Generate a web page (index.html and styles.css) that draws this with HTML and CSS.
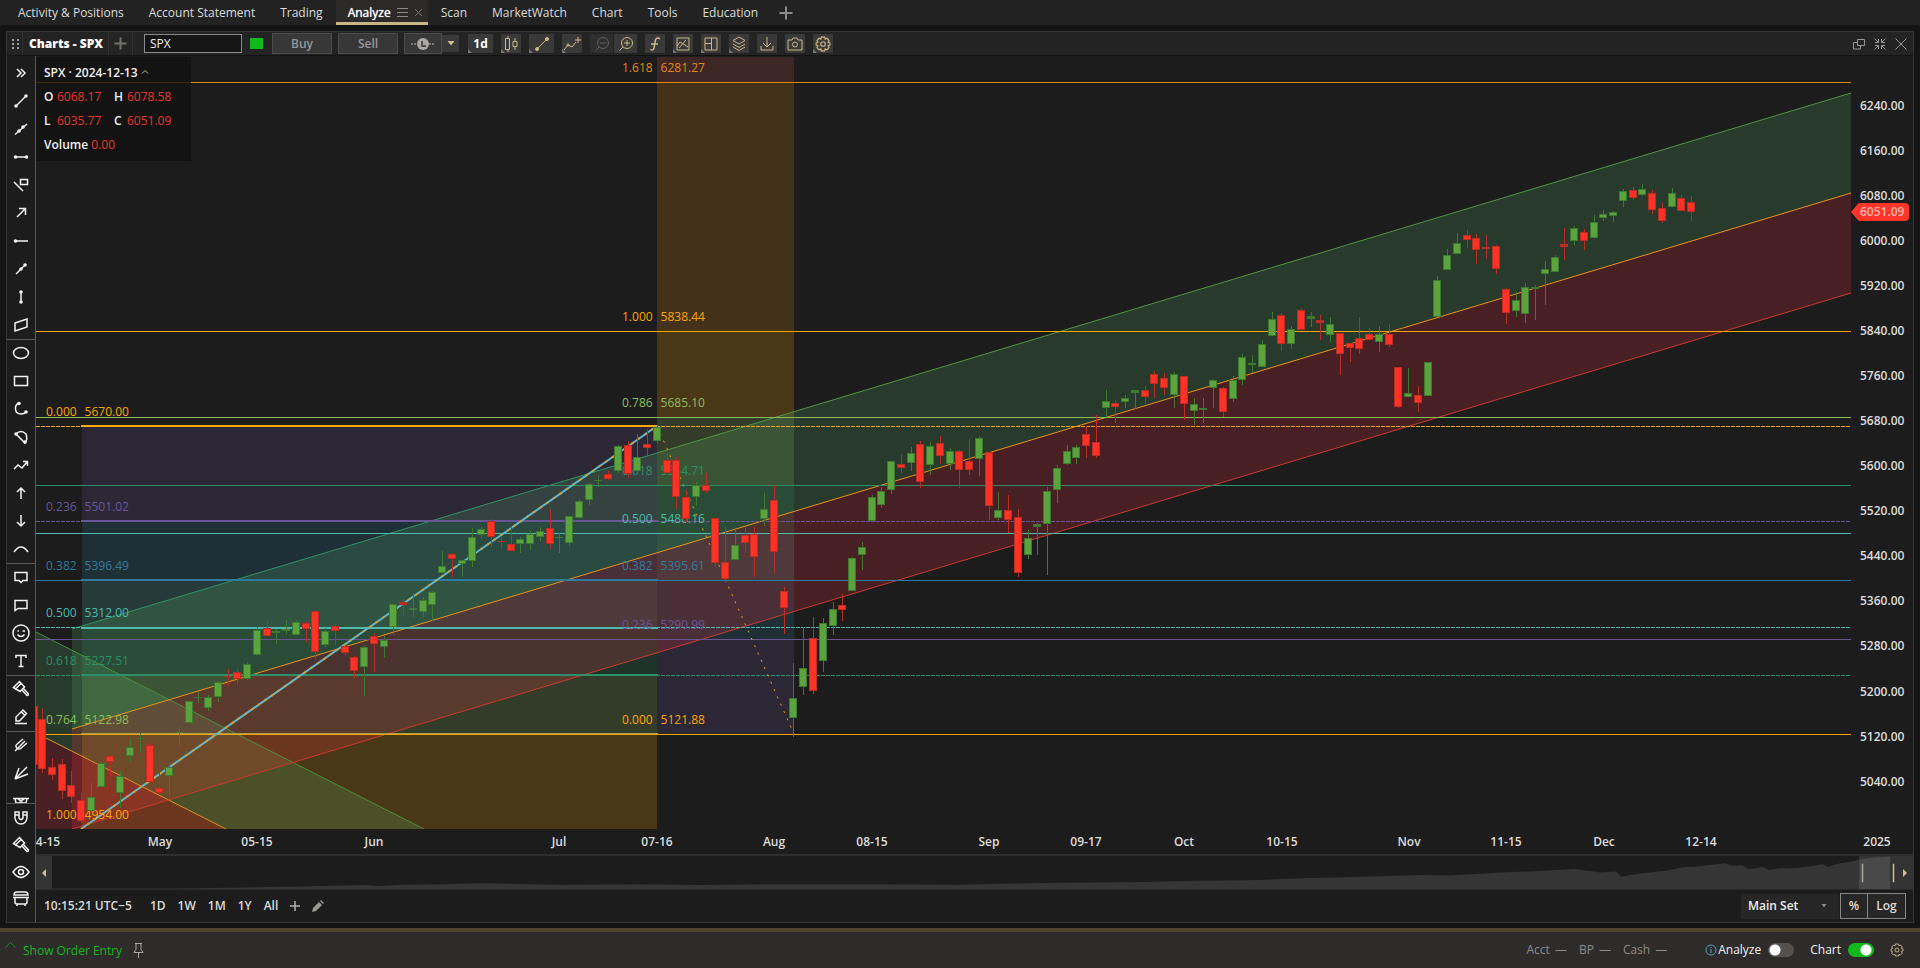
FILE: index.html
```html
<!DOCTYPE html>
<html lang="en">
<head>
<meta charset="utf-8">
<title>Charts - SPX</title>
<link rel="stylesheet" href="styles.css">
</head>
<body>
<nav class="tabs">
  <a class="tab" href="#">Activity &amp; Positions</a>
  <a class="tab" href="#">Account Statement</a>
  <a class="tab" href="#">Trading</a>
  <div class="tab active"><a href="#">Analyze</a>
    <button class="bare" aria-label="Tab menu"><svg width="11" height="12" viewBox="0 0 11 12"><path d="M0 1.500h11M0 5.500h11M0 9.500h11" stroke="#8d8a84"/></svg></button>
    <button class="bare" aria-label="Close tab"><svg width="9" height="12" viewBox="0 0 9 12"><path d="M1 2l7 7M8 2l-7 7" stroke="#77746f"/></svg></button>
  </div>
  <a class="tab" href="#">Scan</a>
  <a class="tab" href="#">MarketWatch</a>
  <a class="tab" href="#">Chart</a>
  <a class="tab" href="#">Tools</a>
  <a class="tab" href="#">Education</a>
  <button class="bare add-tab" aria-label="Add tab"><svg width="14" height="14" viewBox="0 0 14 14"><path d="M7 0.500v13M0.500 7h13" stroke="#8f8d89" stroke-width="2"/></svg></button>
</nav>

<main class="panel">
  <header class="toolbar">
    <span class="grip"><svg width="8" height="12" viewBox="0 0 8 12" fill="#a3a09b"><path d="M0 1h2v2H0zM5 1h2v2H5zM0 5h2v2H0zM5 5h2v2H5zM0 9h2v2H0zM5 9h2v2H5z"/></svg></span>
    <h1 class="title">Charts - SPX</h1>
    <button class="bare add" aria-label="Add chart"><svg width="13" height="13" viewBox="0 0 13 13"><path d="M6.500 0.500v12M0.500 6.500h12" stroke="#74726e" stroke-width="2"/></svg></button>
    <input class="symbol" aria-label="Symbol" value="SPX">
    <i class="link"></i>
    <button class="trade">Buy</button>
    <button class="trade">Sell</button>
    <div class="clock">
      <button class="trade clock-main" aria-label="Session"><svg width="24" height="14" viewBox="0 0 24 14"><path d="M0 7h6M18 7h6" stroke="#bdb9b0" stroke-dasharray="2 1"/><circle cx="12" cy="7" r="6" fill="#aaa8a4"/><path d="M11 4v5h4" stroke="#333" stroke-width="1.500" fill="none"/></svg></button>
      <button class="tool arrow" aria-label="Session menu"><svg width="8" height="5" viewBox="0 0 8 5"><path d="M0.500 0h7L4 4.500z" fill="#d3bd8a"/></svg></button>
    </div>
    <div class="tools" id="tools">
      <button class="tool wide corner">1d</button>
      <button class="tool corner" aria-label="Chart type"><svg width="14" height="16" viewBox="0 0 14 16"><path d="M4 0v2M4 14v2M1.500 2.500h4v11h-4zM11 2v3M11 11v3M9 5.500h4v5H9z"/></svg></button>
      <button class="tool wide corner" aria-label="Draw line"><svg width="14" height="14" viewBox="0 0 14 14"><path d="M2 12L12 2"/><circle cx="2" cy="12" r="1.500" fill="#cdb988"/><circle cx="12" cy="2" r="1.500" fill="#cdb988"/></svg></button>
      <button class="tool corner" aria-label="Add study"><svg width="18" height="16" viewBox="0 0 18 16"><path d="M1 14l4-5 4 2 4-5M15 1v6M12 4h6"/><circle cx="5" cy="9" r="1"/></svg></button>
      <div class="pair">
        <button class="tool dim" aria-label="Zoom out"><svg width="16" height="16" viewBox="0 0 16 16"><circle cx="9" cy="7" r="5.500"/><path d="M5 11l-3.500 3.500M6 7h6"/></svg></button>
        <button class="tool" aria-label="Zoom in"><svg width="16" height="16" viewBox="0 0 16 16"><circle cx="9" cy="7" r="5.500"/><path d="M5 11l-3.500 3.500M6 7h6M9 4v6"/></svg></button>
      </div>
      <button class="tool" aria-label="Functions"><svg width="12" height="14" viewBox="0 0 12 14"><path d="M11 2C9 0 7 1 6.500 3L5 11c-0.500 2-2 2.500-3.500 1.500M2 7h7" stroke-width="1.500"/></svg></button>
      <button class="tool corner" aria-label="Patterns"><svg width="14" height="14" viewBox="0 0 14 14"><path d="M1 1h12v12H1zM1 9l3-4 8 5M3 11l7-8"/></svg></button>
      <button class="tool corner" aria-label="Layout"><svg width="14" height="14" viewBox="0 0 14 14"><path d="M1 1h12v12H1zM7.500 1v12M1 6.500h6"/></svg></button>
      <button class="tool corner" aria-label="Layers"><svg width="14" height="16" viewBox="0 0 14 16"><path d="M7 1l6 3.500L7 8 1 4.500zM1 8l6 3.500L13 8M1 11l6 3.500 6-3.500"/></svg></button>
      <button class="tool" aria-label="Download"><svg width="14" height="14" viewBox="0 0 14 14"><path d="M7 0v9M3 6l4 4 4-4M1 9v4h12V9"/></svg></button>
      <button class="tool" aria-label="Snapshot"><svg width="16" height="14" viewBox="0 0 16 14"><path d="M1 3h4l1-2h4l1 2h4v10H1z"/><circle cx="8" cy="7.500" r="2.500"/></svg></button>
      <button class="tool corner" aria-label="Settings"><svg width="16" height="16" viewBox="0 0 14 14"><path d="M5.500 1h3l.4 1.700 1.600-.7 1.800 2-.9 1.500L13 6v2l-1.600.6.9 1.600-1.800 1.900-1.600-.8L8.500 13h-3l-.4-1.700-1.600.8-1.800-1.900.9-1.600L1 8V6l1.600-.5L1.700 4l1.800-2 1.600.7z"/><circle cx="7" cy="7" r="2"/></svg></button>
    </div>
    <div class="window-actions">
      <button class="bare" aria-label="Pop out"><svg width="12" height="12" viewBox="0 0 12 12"><path d="M4.500 1.500h7v6h-7zM4 4.500H0.500v6.500h7V8" fill="none" stroke="#9a9894"/></svg></button>
      <button class="bare" aria-label="Restore"><svg width="12" height="12" viewBox="0 0 12 12"><path d="M0.500 0.500L4 4M4.500 1v3.500H1M11.500 0.500L8 4M7.500 1v3.500H11M0.500 11.500L4 8M4.500 11V7.500H1M11.500 11.500L8 8M7.500 11V7.500H11" fill="none" stroke="#9a9894"/></svg></button>
      <button class="bare" aria-label="Close"><svg width="12" height="12" viewBox="0 0 12 12"><path d="M0.500 0.500l11 11M11.500 0.500l-11 11" stroke="#9a9894"/></svg></button>
    </div>
  </header>

  <div class="content">
    <aside class="drawbar">
      <div class="scroll" id="drawings"></div>
      <div class="fixed" id="fixed"></div>
    </aside>
    <section class="chart">
      <div class="plot-row">
        <div class="plot" id="plot">
          <svg class="layer" id="under" viewBox="36 57 1815 772" preserveAspectRatio="none"></svg>
          <div class="layer" id="labels"></div>
          <svg class="layer" id="candles" viewBox="36 57 1815 772" preserveAspectRatio="none" shape-rendering="crispEdges"></svg>
          <div class="legend">
            <div>SPX · 2024-12-13 <svg width="8" height="5" viewBox="0 0 8 5"><path d="M1 4.500L4 1.500l3 3" fill="none" stroke="#d3bd8a"/></svg></div>
            <div class="pairs"><span>O</span><em>6068.17</em><span>H</span><em>6078.58</em></div>
            <div class="pairs"><span>L</span><em>6035.77</em><span>C</span><em>6051.09</em></div>
            <div>Volume <em>0.00</em></div>
          </div>
        </div>
        <div class="yaxis" id="yaxis">
          <div class="tag"><svg width="9" height="18" viewBox="0 0 9 18"><path d="M9 0Q7 0 6 2L0 9l6 7q1 2 3 2z" fill="#ff3529"/></svg><span>6051.09</span></div>
        </div>
      </div>
      <div class="xaxis"><div class="xscale" id="xscale"></div></div>
      <div class="navigator">
        <button class="nav-btn" aria-label="Scroll left"><svg width="4" height="8" viewBox="0 0 4 8"><path d="M4 0v8L0 4z" fill="#d3bd8a"/></svg></button>
        <svg class="overview" viewBox="51 855 1846 34" preserveAspectRatio="none">
          <path fill="#353535" d="M51 888.500L180 888.500 300 886.500 340 885.500 365 885 378 886 400 884.500 440 884 480 883 560 884.500 640 884 700 885 780 884 880 884 960 884.500 1000 883.500 1060 882.500 1130 882 1200 880.500 1249 880 1300 878 1360 876.500 1420 874.500 1450 875 1500 872 1540 870.500 1575 868.500 1586 870 1600 872 1608 871.500 1616 871 1621 876.500 1633 874 1667 870 1683 866.500 1700 865.500 1712 864 1725 862.500 1733 865 1742 864.500 1748 868.500 1757 867.500 1762 866 1769 869.500 1780 867.500 1795 867.500 1813 865 1822 863.500 1828 866 1840 862.500 1850 861 1857 859.500 1868 857 1890 855.500 1890 889 51 889z"/>
          <path fill="#ffffff" fill-opacity=".1" d="M1859 855h38v34h-38z"/>
          <path stroke="#aaa69d" stroke-width="1.500" d="M1862.500 863v19"/>
          <path stroke="#d3bd8a" stroke-width="1.500" d="M1893.500 863v19"/>
        </svg>
        <button class="nav-btn" aria-label="Scroll right"><svg width="4" height="8" viewBox="0 0 4 8"><path d="M0 0v8l4-4z" fill="#d3bd8a"/></svg></button>
      </div>
      <footer class="ranges">
        <time>10:15:21 UTC−5</time>
        <button>1D</button><button>1W</button><button>1M</button><button>1Y</button><button>All</button>
        <button aria-label="Add range"><svg width="10" height="10" viewBox="0 0 10 10"><path d="M5 0v10M0 5h10" stroke="#b5b3af" stroke-width="1.500"/></svg></button>
        <button aria-label="Edit ranges"><svg width="12" height="12" viewBox="0 0 12 12" fill="#9a9894"><path d="M0 12l1-4 6-6 3 3-6 6zM8 1l1-1 3 3-1 1z"/></svg></button>
        <span class="spacer"></span>
        <label class="set"><select aria-label="Drawing set"><option>Main Set</option></select><svg width="6" height="4" viewBox="0 0 6 4"><path d="M0.500 0h5L3 3.500z" fill="#8f8d89"/></svg></label>
        <div class="modes"><button>%</button><button>Log</button></div>
      </footer>
    </section>
  </div>
</main>

<footer class="status">
  <svg class="up" width="11" height="6" viewBox="0 0 11 6"><path d="M0.500 5.500l5-5 5 5" fill="none" stroke="#178a1e"/></svg>
  <a class="order" href="#">Show Order Entry</a>
  <button class="bare" aria-label="Pin"><svg width="11" height="17" viewBox="0 0 11 17"><path d="M2 1.500h7M3 1.500v6l-2 3h9l-2-3v-6M5.500 10.500V16" fill="none" stroke="#aaa8a4"/></svg></button>
  <span class="spacer"></span>
  <span class="acct"><span>Acct<b>—</b></span><span>BP<b>—</b></span><span>Cash<b>—</b></span></span>
  <label class="switch info"><svg width="12" height="12" viewBox="0 0 12 12"><circle cx="6" cy="6" r="5" fill="none" stroke="#4fa3bd"/><path d="M6 5v4M6 3v1" stroke="#4fa3bd"/></svg>Analyze<input type="checkbox"></label>
  <label class="switch">Chart<input type="checkbox" checked></label>
  <button class="bare" aria-label="Preferences"><svg width="14" height="14" viewBox="0 0 14 14" fill="none" stroke="#c4b083"><path d="M5.500 1h3l.4 1.700 1.600-.7 1.800 2-.9 1.500L13 6v2l-1.600.6.9 1.600-1.800 1.900-1.600-.8L8.500 13h-3l-.4-1.700-1.600.8-1.800-1.900.9-1.600L1 8V6l1.600-.5L1.700 4l1.800-2 1.600.7z"/><circle cx="7" cy="7" r="2"/></svg></button>
</footer>
<script src="chart.js"></script>
</body>
</html>
```

FILE: styles.css
```css
* { box-sizing: border-box; }
html, body { height: 100%; }
body {
  margin: 0;
  display: flex;
  flex-direction: column;
  overflow: hidden;
  background: #141414;
  color: #dcdcdc;
  font: 12px/16px "Open Sans", "Noto Sans", sans-serif;
}
a { color: inherit; text-decoration: none; }
button, input, select { font: inherit; color: inherit; border: 0; padding: 0; margin: 0; background: none; border-radius: 0; }
button, .tab svg, .tool svg { display: flex; align-items: center; justify-content: center; }
svg { flex: none; display: block; }
.spacer { flex: 1; }

.tabs { display: flex; height: 25px; flex: none; padding-left: 6px; gap: 1px; background: #222; }
.tab { display: flex; align-items: center; padding: 1px 12px 0; white-space: nowrap; }
.tab.active { background: #2b2a29; color: #fff; padding: 3px 5px 0 12px; gap: 6px; border-bottom: 3px solid #c8b584; text-shadow: 0 0 1px #fff; }
.add-tab { margin-left: 8px; }

.panel { flex: 1; min-height: 0; margin: 6px 6px 5px; border: 1px solid #353535; background: #1c1c1c; display: flex; flex-direction: column; }
.toolbar { height: 24px; flex: none; display: flex; align-items: center; background: #232323; border-bottom: 1px solid #121212; }
.grip, .title, .add { height: 100%; display: flex; align-items: center; border-right: 1px solid #303030; }
.grip { width: 16px; padding-left: 5px; }
.title { width: 86px; margin: 0; padding-left: 6px; font-size: 12px; font-weight: 800; color: #fff; white-space: nowrap; }
.add { width: 24px; border-right: 1px solid #303030; }
.symbol { width: 98px; height: 19px; margin-left: 11px; padding: 0 5px; border: 1px solid #8a8a8a; background: #151515; color: #eee; }
.link { width: 13px; height: 11px; margin: 0 9px 0 8px; background: #10b91c; }
.trade { width: 60px; height: 21px; margin-right: 6px; border: 1px solid #4b4b4b; background: #373737; color: #969696; font-weight: 600; }
.clock { display: flex; align-items: center; margin-right: 9px; }
.trade.clock-main { width: 38px; margin: 0; }
.tools { display: flex; gap: 8px; }
.tool { position: relative; width: 20px; height: 19px; background: #393939; color: #fff; font-weight: 700; }
.tool.wide { width: 25px; }
.tool.arrow { width: 17px; height: 17px; }
.tool svg { fill: none; stroke: #cdb988; }
.tool.arrow svg { stroke: none; }
.tool.corner::after { content: ""; position: absolute; left: 0; bottom: 0; border: 2px solid transparent; border-left-color: #777; border-bottom-color: #777; }
.pair { display: flex; gap: 1px; }
.pair .tool { width: 23px; }
.pair .dim { background: #2e2e2e; }
.pair .dim svg { stroke: #626059; }
.window-actions { margin-left: auto; display: flex; gap: 9px; padding-right: 6px; }

.content { flex: 1; min-height: 0; display: flex; }
.drawbar { width: 29px; flex: none; display: flex; flex-direction: column; border-right: 1px solid #5a5a5a; }
.scroll { flex: 1; min-height: 0; overflow: hidden; padding-top: 3px; }
.fixed { flex: none; border-top: 1px solid #5a5a5a; padding-bottom: 10px; }
.group + .group { box-shadow: inset 0 1px #5a5a5a; }
.draw { width: 28px; height: 28px; }
.fixed .draw { height: 27px; }
.draw svg { fill: none; stroke: #f2f2f2; stroke-width: 1.500; }
.draw .dot { fill: #f2f2f2; stroke: none; }

.chart { flex: 1; min-width: 0; display: flex; flex-direction: column; padding-top: 1px; }
.plot-row { flex: 1; min-height: 0; display: flex; }
.plot { flex: 1; min-width: 0; position: relative; overflow: hidden; }
.layer { position: absolute; left: 0; top: 0; width: 100%; height: 100%; }
.fib { position: absolute; display: flex; gap: 8px; margin-top: -7px; white-space: nowrap; font-weight: 500; }
.legend { position: absolute; left: 0; top: 0; width: 155px; padding: 8px 8px 8px; background: rgba(17, 17, 17, .8); color: #f0f0f0; font-weight: 600; display: flex; flex-direction: column; gap: 8px; }
.legend svg { display: inline-block; vertical-align: 3px; }
.legend em { font-style: normal; font-weight: 400; color: #e8372d; }
.pairs { display: grid; grid-template-columns: 13px 57px 13px 57px; }
.yaxis { position: relative; width: 62px; flex: none; font-weight: 600; }
.tick { position: absolute; left: 9px; margin-top: -8px; }
.tag { position: absolute; left: 0; top: 19%; margin-top: -1px; display: flex; line-height: 18px; color: #ffb4ad; z-index: 1; }
.tag span { padding-right: 5px; background: #ff3529; border-radius: 0 4px 4px 0; }
.xaxis { height: 25px; flex: none; font-weight: 600; overflow: hidden; }
.xscale { position: relative; margin-right: 62px; height: 100%; }
.date { position: absolute; top: 5px; transform: translateX(-50%); }
.navigator { height: 36px; flex: none; display: flex; border-top: 2px solid #2e2e2e; border-bottom: 1px solid #2a2a2a; }
.nav-btn { width: 16px; background: #333; }
.overview { flex: 1; min-width: 0; height: 100%; }
.ranges { height: 32px; flex: none; display: flex; align-items: center; padding: 0 7px 0 8px; gap: 12px; font-weight: 600; color: #dadada; }
.ranges time { margin-right: 6px; }
.set { position: relative; display: flex; align-items: center; width: 98px; height: 25px; background: #262626; }
.set select { appearance: none; width: 100%; height: 100%; padding-left: 7px; color: #eee; }
.set svg { position: absolute; right: 12px; }
.modes { display: flex; margin-left: -11px; }
.modes button { height: 26px; width: 28px; border: 1px solid #858585; background: #262626; }
.modes button + button { width: 39px; margin-left: -1px; }

.status { flex: none; height: 40px; border-top: 4px solid #4f452f; background: #2d2c2b; display: flex; align-items: center; padding: 0 16px 0 5px; }
.bare svg { display: block; }
.up { margin-bottom: 10px; }
.order { color: #14b81e; margin: 2px 11px 0 7px; }
.acct { display: flex; gap: 12px; color: #8d8b87; margin-right: 38px; }
.acct b { font-weight: 400; margin-left: 5px; }
.switch { display: flex; align-items: center; color: #f2f2f2; margin-right: 16px; }
.switch input { appearance: none; width: 26px; height: 14px; border-radius: 7px; margin-left: 7px; background: radial-gradient(circle at 7px 7px, #fff 5px, transparent 6px) #55524e; }
.switch input:checked { background: radial-gradient(circle at 18px 7px, #fff 5px, transparent 6px) #10b91c; }
.info svg { margin-right: 1px; }
```

FILE: chart.js
```js
// Plot coordinates: x 36..1851, y 57..829
const X0 = 36, Y0 = 57, W = 1815, H = 772;
const px = x => (x - X0) / W * 100 + '%';
const py = y => (y - Y0) / H * 100 + '%';

const C = { or: '#ffa500', top: '#e08a10', lime: '#8bbf5a', grn: '#2b9068', teal: '#4fb9ad', blue: '#2f7b9f', pur: '#6b5599', red: '#c93a2d' };
const rect = (x, y, w, h, f) => `<rect x="${x}" y="${y}" width="${w}" height="${h}" fill="${f}" fill-opacity=".2" shape-rendering="crispEdges"/>`;
const line = (x1, y1, x2, y2, c, w = 1, d = '') => `<path d="M${x1} ${y1}L${x2} ${y2}" stroke="${c}" stroke-width="${w}" stroke-dasharray="${d}" fill="none"/>`;
const poly = (p, f) => `<polygon points="${p}" fill="${f}" fill-opacity=".2"/>`;

let s = '';
[[427, 521, C.pur], [521, 580, C.blue], [580, 628, C.teal], [628, 675, C.grn], [675, 734, C.lime], [734, 829, C.or]]
  .forEach(b => s += rect(82, b[0], 575, b[1] - b[0], b[2]));
[[57, 82, '#c85046'], [82, 331, C.top], [331, 417, C.or], [417, 485, C.lime], [485, 533, C.grn], [533, 580, C.teal], [580, 639, C.blue], [639, 734, C.pur]]
  .forEach(b => s += rect(657, b[0], 137, b[1] - b[0], b[2]));
s += poly('36,632 424,829 226,829 36,733', '#58b267') + poly('36,733 226,829 36,829', '#f8303f');
s += poly('72,629 1851,93 1851,193 72,729', '#58b267') + poly('72,729 1851,193 1851,293 72,829', '#f8303f');
s += line(36, 632, 424, 829, '#4f8f3d') + line(36, 733, 226, 829, '#e0901a');
s += line(72, 629, 657, 453, '#2f9464') + line(657, 453, 1851, 93, '#4f963f') + line(72, 729, 1851, 193, '#e8941a') + line(72, 829, 1851, 293, C.red);
s += line(81, 733.5, 658, 733.5, '#a8a050');
[[82.5, C.top], [331.5, C.or], [417.5, C.lime], [485.5, C.grn], [533.5, C.teal], [580.5, C.blue], [639.5, C.pur], [734.5, C.or]]
  .forEach(l => s += line(36, l[0], 1851, l[0], l[1]));
[[426.5, C.or], [521.5, C.pur], [627.5, C.teal], [675.5, C.grn]]
  .forEach(l => s += line(36, l[0], 1851, l[0], l[1], 1, '4 1'));
[[426, C.or], [521, C.pur], [580, C.blue], [628, C.teal], [675, C.grn]]
  .forEach(l => s += line(81, l[0], 658, l[0], l[1], 2));
s += line(81, 829, 657, 426, '#63b9cb', 2) + line(81, 829, 657, 426, '#e09a20', 2, '2 6') + line(657, 426, 794, 734, C.or, 1, '2 6');
document.getElementById('under').innerHTML = s;

// [x, y, ratio, price, colour]
const fibs = [
  [46, 411, '0.000', '5670.00', C.or], [46, 506, '0.236', '5501.02', C.pur], [46, 565, '0.382', '5396.49', C.blue],
  [46, 612, '0.500', '5312.00', C.teal], [46, 660, '0.618', '5227.51', C.grn], [46, 719, '0.764', '5122.98', C.lime], [46, 814, '1.000', '4954.00', C.or],
  [622, 67, '1.618', '6281.27', C.top], [622, 316, '1.000', '5838.44', C.or], [622, 402, '0.786', '5685.10', C.lime],
  [622, 470, '0.618', '5564.71', C.grn], [622, 518, '0.500', '5480.16', C.teal], [622, 565, '0.382', '5395.61', C.blue],
  [622, 624, '0.236', '5290.99', C.pur], [622, 719, '0.000', '5121.88', C.or]
];
document.getElementById('labels').innerHTML = fibs.map(f =>
  `<div class="fib" style="left:${px(f[0])};top:${py(f[1])};color:${f[4]}"><span>${f[2]}</span><span>${f[3]}</span></div>`).join('');

// One session per entry: direction, high, body top, body bottom, low
const data = `R 706 706 765 765|R 708 719 769 773|R 758 767 775 780|R 759 764 791 799|R 771 785 797 803|R 793 800 821 823|G 782 797 811 813|G 762 763 787 787|R 755 756 762 777|G 771 776 793 808|G 739 747 756 762|G 733 738 739 753|R 743 745 782 783|R 750 788 793 795|G 763 767 776 797|G 726 732 733 746|G 701 701 723 723|G 691 697 698 703|G 695 697 708 711|G 682 682 697 702|R 669 676 677 686|R 669 672 679 685|G 662 664 679 680|G 627 630 655 655|R 620 628 636 636|G 629 631 633 644|G 620 629 631 634|G 620 622 635 635|R 621 623 629 642|R 610 611 652 659|G 628 631 645 647|R 624 626 631 645|R 645 646 653 655|R 656 657 671 678|G 645 647 667 696|R 633 636 644 672|G 636 640 647 658|G 604 604 627 635|R 599 602 605 615|G 593 608 610 617|G 597 600 612 617|G 591 592 605 621|G 551 566 573 573|R 553 554 559 577|G 560 560 564 577|G 528 537 561 567|G 527 529 535 539|R 519 521 537 547|R 537 541 542 548|R 527 544 551 551|G 537 539 544 553|G 531 534 544 550|G 527 531 537 541|R 509 528 544 549|G 533 537 538 553|G 516 516 543 546|G 499 501 518 518|G 483 484 500 505|G 475 480 481 487|R 471 474 479 480|G 445 446 471 473|R 441 445 474 478|G 434 457 471 471|R 429 444 448 457|G 425 427 441 443|R 453 460 473 473|R 457 460 497 509|R 490 497 519 523|G 482 485 497 506|R 473 485 491 493|R 518 518 563 567|R 527 562 579 583|G 529 545 560 560|R 528 535 543 553|R 527 534 557 577|G 493 509 519 526|R 485 500 552 573|R 587 591 608 634|G 663 698 718 737|G 627 668 687 695|R 617 638 691 694|G 618 623 661 672|G 602 609 626 635|R 594 605 610 621|G 557 558 591 591|G 542 547 555 570|G 495 497 521 521|G 487 491 505 508|G 461 461 490 494|R 454 464 468 473|G 447 453 463 471|R 441 444 482 488|G 442 446 465 475|R 436 443 456 464|G 448 451 464 470|R 450 451 470 488|R 439 461 470 475|G 436 438 459 476|R 452 452 506 520|G 492 510 518 520|R 495 510 520 533|R 509 517 573 577|G 530 538 555 559|G 523 524 527 555|G 487 491 524 575|G 465 468 490 503|G 445 451 464 465|G 445 447 458 464|R 426 434 446 458|R 415 442 456 458|G 390 401 408 417|R 400 403 407 423|G 395 398 402 408|G 390 390 393 409|R 386 390 397 403|R 371 374 384 398|R 373 378 388 395|G 372 374 395 408|R 376 376 404 420|G 398 404 411 425|G 398 408 410 423|G 379 380 388 408|R 387 388 412 417|G 376 380 399 402|G 354 357 380 385|G 355 363 365 373|G 340 344 367 367|G 312 319 336 336|R 313 315 344 351|G 326 329 344 349|R 308 310 330 330|G 312 316 319 327|R 315 320 323 340|G 317 324 335 342|R 333 333 354 375|R 343 343 348 362|R 317 338 349 354|R 328 334 340 340|G 326 334 342 352|R 324 334 345 347|R 367 367 407 408|G 368 393 397 397|R 386 395 403 412|G 362 362 396 396|G 276 280 317 317|G 249 255 270 270|G 233 243 254 254|R 230 235 240 248|R 234 238 250 264|R 235 247 249 259|R 245 246 269 274|R 288 289 313 324|G 292 300 311 317|G 283 287 314 323|G 285 287 289 320|G 261 269 274 305|G 255 257 272 272|R 228 244 247 260|G 226 228 241 245|R 229 232 241 250|G 215 222 238 238|G 210 214 218 221|G 211 212 216 222|G 189 191 201 207|R 187 190 198 200|G 184 189 195 196|R 190 193 210 214|R 203 208 221 223|G 188 193 207 207|R 195 198 211 211|R 196 202 212 221`;
document.getElementById('candles').innerHTML = data.split('|').map((row, i) => {
  const [d, ...v] = row.split(' ');
  const [hi, a, b, lo] = v.map(Number);
  const x = Math.max(30, Math.round(38.2 + (i - 1) * 9.757));
  const edge = d === 'G' ? '#3d7a30' : '#b92d24', fill = d === 'G' ? '#5aa33d' : '#ff3226';
  const h = Math.max(b - a, 1);
  return `<path d="M${x + 4} ${hi}h1V${lo}h-1z" fill="${edge}"/><rect x="${x}" y="${a}" width="8" height="${h}" fill="${edge}"/>` +
    (h > 3 ? `<rect x="${x + 1}" y="${a + 1}" width="6" height="${h - 2}" fill="${fill}"/>` : '');
}).join('');

let ticks = '';
for (let p = 6240, i = 0; p >= 5040; p -= 80, i++) ticks += `<div class="tick" style="top:${py(105.5 + i * 45.080)}">${p}.00</div>`;
document.getElementById('yaxis').insertAdjacentHTML('beforeend', ticks);

const dates = [['4-15', 48], ['May', 160], ['05-15', 257], ['Jun', 374], ['Jul', 559], ['07-16', 657], ['Aug', 774], ['08-15', 872], ['Sep', 989], ['09-17', 1086], ['Oct', 1184], ['10-15', 1282], ['Nov', 1409], ['11-15', 1506], ['Dec', 1604], ['12-14', 1701], ['2025', 1877]];
document.getElementById('xscale').innerHTML = dates.map(d => `<span class="date" style="left:${px(d[1])}">${d[0]}</span>`).join('');

// Drawing tools
const dot = (x, y) => `<circle class="dot" cx="${x}" cy="${y}" r="1.8"/>`;
const brush = '<path d="M1.500 7.500L7.500 1.500l5 5.500-4.500 4.500zM3 9.500L9.500 3M10 10l5 5.500q1.500 0 1.500-1.500L11.500 8.500"/>';
const icons = [
  [
    ['Expand', '<path d="M5 5l4 4-4 4M9 5l4 4-4 4"/>'],
    ['Trend line', '<path d="M4 14L14 4"/>' + dot(4, 14) + dot(14, 4)],
    ['Extended line', '<path d="M3 14.500L15 4"/>' + dot(7, 11) + dot(11, 7)],
    ['Segment', '<path d="M3 9h12"/>' + dot(3.5, 9) + dot(14.5, 9)],
    ['Callout line', '<path d="M2 6l9 9M8.500 3.500h7v5h-7z"/>'],
    ['Arrow line', '<path d="M5 13l8-8M7 4.500h6.500V11"/>'],
    ['Ray', '<path d="M3 9h13"/>' + dot(3.500, 9)],
    ['Ray through points', '<path d="M4 14L14 4"/>' + dot(9, 9) + dot(13, 5)],
    ['Vertical line', '<path d="M9 3v12"/>' + dot(9, 4) + dot(9, 14)],
    ['Parallelogram', '<path d="M3 7l12-4v8L3 15z"/>']
  ], [
    ['Ellipse', '<ellipse cx="9" cy="9" rx="7.500" ry="5.500"/>'],
    ['Rectangle', '<path d="M2.500 4.500h13v9h-13z"/>'],
    ['Arc', '<path d="M7 3C2 5 2 14 9 14q3 0 5-2"/>' + dot(7, 3.500) + dot(14, 12)],
    ['Sector', '<path d="M4 6q5-5 10 0 2 5-1 9L4 6z"/>' + dot(4, 6) + dot(13, 14)],
    ['Path', '<path d="M2 13l4-4 4 3 5-6M11 5.500h4.500V10"/>'],
    ['Arrow up', '<path d="M9 15V4M5 8l4-4 4 4"/>'],
    ['Arrow down', '<path d="M9 3v11M5 10l4 4 4-4"/>'],
    ['Curve', '<path d="M2 12q7-10 14 0"/>']
  ], [
    ['Price note', '<path d="M3 4.500h12v8h-4l-2 2-2-2H3z"/>'],
    ['Comment', '<path d="M3 4.500h12v8H6l-3 2z"/>'],
    ['Emoji', '<circle cx="9" cy="9" r="8"/><path d="M5.500 10.500q3.500 4 7 0M5.500 7h1.500M10.500 7h2.500"/>'],
    ['Text', '<path d="M4 6V3.500h10V6M9 3.500v11M6.500 14.500h5"/>']
  ], [
    ['Brush', brush],
    ['Marker', '<path d="M4 13V9l7-7 3.500 3.500L7.500 13zM9.500 4l3 3M3 15.500h12"/>']
  ], [
    ['Pitchfork', '<path d="M3 15l3-3M4 9l7-6M8 13l7-6M6 12l7-7M4 9q-0.500 4 4 4"/>'],
    ['Fan', '<path d="M3 15L7 4M3 15L15 3M3 15l13-5M3 15l10-10"/>'],
    ['Cycles', '<path d="M1 6.500h16M3 6.500l1 4.500h3q2-2 4 0h3l1-4.500M6 7q3 3 6 0"/>']
  ]
];
const fixed = [
  ['Magnet', '<path d="M3 3h4v6q2 3 4 0V3h4v6q-1 6-6 6t-6-6zM3 6h4M11 6h4"/>'],
  ['Brush style', brush],
  ['Visibility', '<path d="M1 9q8-11 16 0-8 11-16 0z"/><circle cx="9" cy="9" r="2.500"/>'],
  ['Storage', '<path d="M2 5q0-3 3-3h8q3 0 3 3zM1 7.500h16M3 8v4q0 2 2 2h8q2 0 2-2V8M5 14v2M13 14v2"/>']
];
const btn = ([n, p]) => `<button class="draw" aria-label="${n}"><svg width="18" height="18" viewBox="0 0 18 18">${p}</svg></button>`;
document.getElementById('drawings').innerHTML = icons.map(g => `<div class="group">${g.map(btn).join('')}</div>`).join('');
document.getElementById('fixed').innerHTML = fixed.map(btn).join('');
```
